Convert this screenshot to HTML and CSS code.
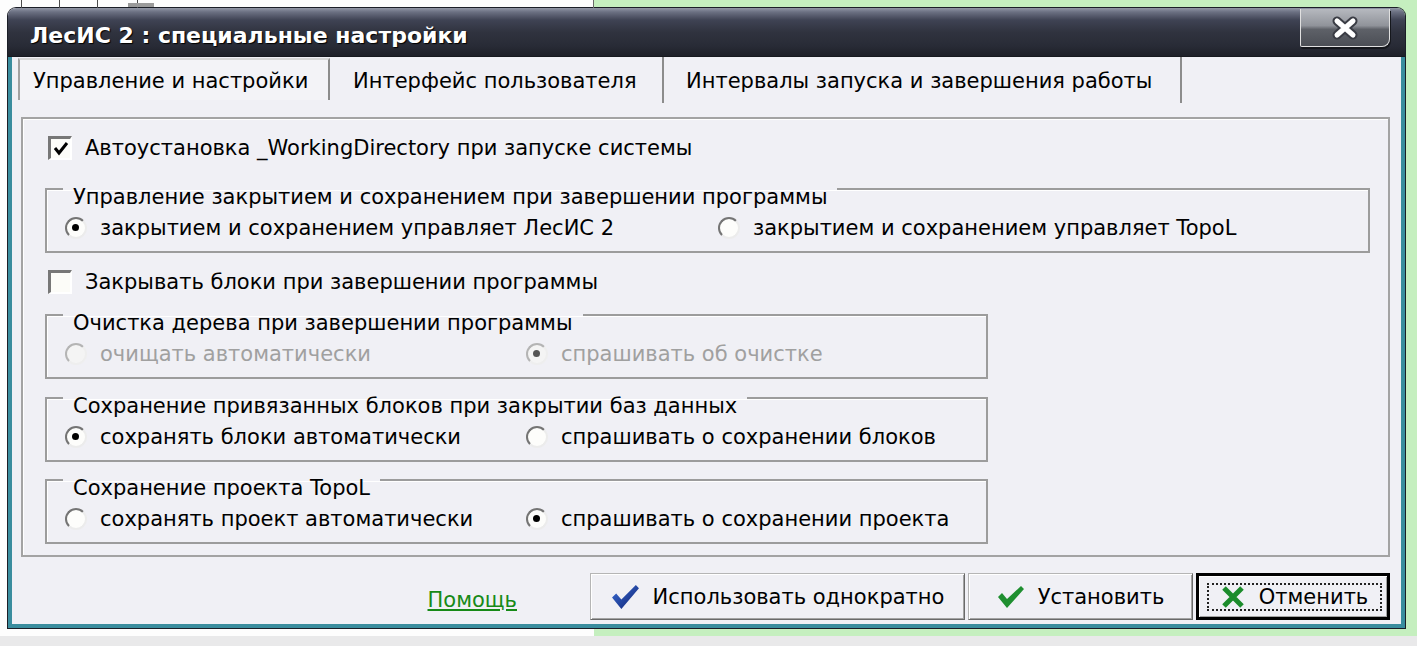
FILE: index.html
```html
<!DOCTYPE html>
<html lang="ru">
<head>
    <meta charset="UTF-8">
    <meta name="viewport" content="width=device-width, initial-scale=1.0">
    <title>ЛесИС 2 : специальные настройки</title>
    <link rel="stylesheet" href="styles.css">
</head>
<body>
    <div class="desk-top">
        <span class="cell cell-first"></span>
        <span class="cell"></span>
        <span class="cell"></span>
        <span class="cell cell-mid"><i class="desk-bar"></i></span>
        <span class="cell cell-wide"></span>
    </div>
    <div class="window">
        <div class="titlebar">
            <h1 class="title">ЛесИС 2 : специальные настройки</h1>
            <button class="close-btn" type="button">
                <svg width="32" height="24" viewBox="0 0 32 24">
                    <path d="M8 5 L24 19 M24 5 L8 19" stroke="#3a3c44" stroke-width="9" stroke-linecap="round" fill="none"/>
                    <path d="M8 5 L24 19 M24 5 L8 19" stroke="#ffffff" stroke-width="5" stroke-linecap="round" fill="none"/>
                </svg>
            </button>
        </div>
        <div class="window-body">
            <ul class="tabs">
                <li class="tab tab-1 is-active">Управление и настройки</li>
                <li class="tab tab-2">Интерфейс пользователя</li>
                <li class="tab tab-3">Интервалы запуска и завершения работы</li>
            </ul>
            <div class="panel">
                <label class="check-row">
                    <span class="checkbox">
                        <svg width="18" height="18" viewBox="0 0 18 18">
                            <path d="M3 8 L7 13 L15 3" stroke="#000" stroke-width="3" fill="none"/>
                        </svg>
                    </span>
                    Автоустановка _WorkingDirectory при запуске системы
                </label>

                <fieldset class="group group-1">
                    <legend>Управление закрытием и сохранением при завершении программы</legend>
                    <div class="options">
                        <label class="option option-wide"><span class="radio is-checked"></span>закрытием и сохранением управляет ЛесИС 2</label>
                        <label class="option"><span class="radio"></span>закрытием и сохранением управляет TopoL</label>
                    </div>
                </fieldset>

                <label class="check-row check-row-2">
                    <span class="checkbox"></span>
                    Закрывать блоки при завершении программы
                </label>

                <fieldset class="group group-narrow group-2 is-disabled">
                    <legend>Очистка дерева при завершении программы</legend>
                    <div class="options">
                        <label class="option"><span class="radio"></span>очищать автоматически</label>
                        <label class="option"><span class="radio is-checked"></span>спрашивать об очистке</label>
                    </div>
                </fieldset>

                <fieldset class="group group-narrow group-3">
                    <legend>Сохранение привязанных блоков при закрытии баз данных</legend>
                    <div class="options">
                        <label class="option"><span class="radio is-checked"></span>сохранять блоки автоматически</label>
                        <label class="option"><span class="radio"></span>спрашивать о сохранении блоков</label>
                    </div>
                </fieldset>

                <fieldset class="group group-narrow group-4">
                    <legend>Сохранение проекта TopoL</legend>
                    <div class="options">
                        <label class="option"><span class="radio"></span>сохранять проект автоматически</label>
                        <label class="option"><span class="radio is-checked"></span>спрашивать о сохранении проекта</label>
                    </div>
                </fieldset>
            </div>
            <div class="footer">
                <a class="help-link" href="#">Помощь</a>
                <button class="btn btn-once" type="button">
                    <svg width="29" height="26" viewBox="0 0 28 25">
                        <defs>
                            <linearGradient id="blueCheck" x1="0" y1="0" x2="1" y2="1">
                                <stop offset="0" stop-color="#3a6fd8"/>
                                <stop offset="1" stop-color="#0f1f6e"/>
                            </linearGradient>
                        </defs>
                        <path d="M1 13 L5 9 L10 15 L24 1 L27 4 L10 24 Z" fill="url(#blueCheck)"/>
                    </svg>
                    Использовать однократно
                </button>
                <button class="btn btn-set" type="button">
                    <svg width="28" height="24" viewBox="0 0 28 24">
                        <path d="M1 12 L5 8 L10 14 L24 1 L27 4 L10 23 Z" fill="#1f8f30"/>
                    </svg>
                    Установить
                </button>
                <button class="btn btn-cancel" type="button">
                    <span class="focus-box">
                        <svg width="24" height="22" viewBox="0 0 24 22">
                            <path d="M3 2 L21 20 M21 2 L3 20" stroke="#1c8c2c" stroke-width="5" fill="none"/>
                        </svg>
                        Отменить
                    </span>
                </button>
            </div>
        </div>
    </div>
    <div class="desk-bottom"></div>
</body>
</html>
```

FILE: styles.css
```css
* {
    margin: 0;
    padding: 0;
    box-sizing: border-box;
}
body {
    width: 1417px;
    height: 646px;
    overflow: hidden;
    background: linear-gradient(90deg, #fdfdfd 594px, #c5efbf 594px);
    font-family: "DejaVu Sans", Verdana, sans-serif;
    font-size: 21px;
    line-height: 24px;
    color: #000;
}

/* desktop behind the dialog */
.desk-top {
    height: 8px;
    display: flex;
}
.cell {
    width: 38px;
    border-right: 1px solid #4c4c4c;
}
.cell-first {
    width: 22px;
}
.cell-mid {
    width: 40px;
}
.cell-wide {
    width: 456px;
    border-right: 1px solid #6a6a6a;
}
.desk-bar {
    display: block;
    width: 26px;
    height: 4px;
    margin: 3px 0 0 30px;
    background: #9a9a9a;
}
.desk-bottom {
    height: 18px;
    background: linear-gradient(transparent 8px, #e9e9ea 8px);
}

/* window */
.window {
    margin-left: 8px;
    width: 1397px;
    height: 620px;
    display: flex;
    flex-direction: column;
    border-radius: 8px 8px 0 0;
    box-shadow: 0 0 0 1px #1b1e27;
}
.titlebar {
    height: 49px;
    display: flex;
    align-items: flex-start;
    padding-left: 22px;
    border-radius: 8px 8px 0 0;
    border-bottom: 1px solid #17191f;
    background: linear-gradient(#9297a6 0, #6b7082 4px, #3f4354 12px, #30333f 24px, #282b36 38px, #1e2028 48px);
}
.title {
    margin-top: 16px;
    font-size: 22px;
    line-height: 24px;
    font-weight: bold;
    color: #fff;
    text-shadow: 1px 1px 1px #000;
}
.close-btn {
    margin-left: auto;
    margin-right: 15px;
    margin-top: 1px;
    width: 90px;
    height: 38px;
    display: flex;
    align-items: center;
    justify-content: center;
    border: 1px solid #e0e0e0;
    border-top: 0;
    border-radius: 0 0 8px 2px;
    background: linear-gradient(#b6b9bf 0, #90939a 45%, #5e6168 55%, #4b4e55 100%);
    box-shadow: 1px 2px 0 #15171c;
}
.window-body {
    flex: 1;
    display: flex;
    flex-direction: column;
    background: #f0f0f5;
    border: 4px solid #3a8d9e;
    border-top: 0;
}

/* tabs */
.tabs {
    display: flex;
    list-style: none;
    height: 46px;
    margin-left: 6px;
}
.tab {
    display: flex;
    align-items: center;
    padding-top: 1px;
    border-right: 2px solid #8c8c8c;
    white-space: nowrap;
}
.tab-1 {
    width: 312px;
    height: 42px;
    margin-top: 1px;
    padding-left: 13px;
    padding-top: 2px;
    background: #f3f3f7;
    border-left: 2px solid #a2a2a2;
    border-top: 2px solid #d6d6d6;
}
.tab-2 {
    width: 334px;
    padding-left: 23px;
}
.tab-3 {
    width: 518px;
    padding-left: 22px;
}

/* panel */
.panel {
    margin: 14px 11px 0 9px;
    height: 440px;
    display: flex;
    flex-direction: column;
    align-items: flex-start;
    padding: 17px 18px 0 22px;
    border: 2px solid #a3a3a3;
    box-shadow: inset 1px 1px 0 #fff;
}
.check-row {
    display: flex;
    align-items: center;
    height: 24px;
    padding-left: 3px;
    white-space: nowrap;
}
.check-row-2 {
    margin-top: 17px;
}
.checkbox {
    flex: none;
    width: 24px;
    height: 24px;
    margin-right: 13px;
    display: flex;
    align-items: center;
    justify-content: center;
    background: #fcfcf8;
    border-style: solid;
    border-width: 3px 2px 2px 3px;
    border-color: #777 #fff #fff #777;
}

/* group boxes */
.group {
    margin-top: 13px;
    width: 100%;
    min-width: 0;
    padding: 11px 0 11px 18px;
    border: 2px solid #9c9c9c;
    box-shadow: inset 1px 1px 0 #fff;
}
.group legend {
    margin-left: -2px;
    padding: 16px 10px 0;
    line-height: 16px;
    white-space: nowrap;
}
.group-narrow {
    width: 943px;
}
.group-2 {
    margin-top: 5px;
}
.group-3 {
    margin-top: 3px;
}
.group-4 {
    margin-top: 2px;
}
.options {
    display: flex;
}
.option {
    flex: none;
    display: flex;
    align-items: center;
    height: 24px;
    width: 461px;
    white-space: nowrap;
}
.option:last-child {
    width: auto;
}
.option-wide {
    width: 653px;
}
.radio {
    flex: none;
    position: relative;
    width: 22px;
    height: 22px;
    margin-right: 13px;
    border-radius: 50%;
    background: #fdfdfb;
    border: 2px solid;
    border-color: #747474 #ececec #ececec #747474;
}
.radio.is-checked::after {
    content: "";
    position: absolute;
    left: 5px;
    top: 5px;
    width: 7px;
    height: 7px;
    border-radius: 50%;
    background: #000;
}
.is-disabled .option {
    color: #a0a0a0;
}
.is-disabled .radio {
    border-color: #b4b4b4 #eee #eee #b4b4b4;
    background: #f4f4f4;
}
.is-disabled .radio.is-checked::after {
    background: #555;
}

/* bottom buttons */
.footer {
    display: flex;
    align-items: center;
    justify-content: flex-end;
    padding: 16px 11px 0 0;
}
.help-link {
    margin: 6px 70px 0 0;
    color: #178a17;
    text-decoration: underline;
}
.btn {
    height: 47px;
    margin-left: 3px;
    display: flex;
    align-items: center;
    justify-content: center;
    gap: 13px;
    font: inherit;
    color: #000;
    background: #f0f0f5;
    border: 1px solid;
    border-color: #b5b5b5 #6a6a6a #6a6a6a #b5b5b5;
    box-shadow: inset 1px 1px 0 #fff, inset -1px -1px 0 #a3a3a3;
    white-space: nowrap;
}
.btn-once {
    width: 375px;
}
.btn-set {
    width: 225px;
}
.btn-cancel {
    width: 194px;
    padding: 7px 5px 6px 8px;
    border: 3px solid #000;
}
.focus-box {
    flex: 1;
    align-self: stretch;
    display: flex;
    align-items: center;
    justify-content: center;
    gap: 14px;
    border: 2px dotted #222;
}
```
